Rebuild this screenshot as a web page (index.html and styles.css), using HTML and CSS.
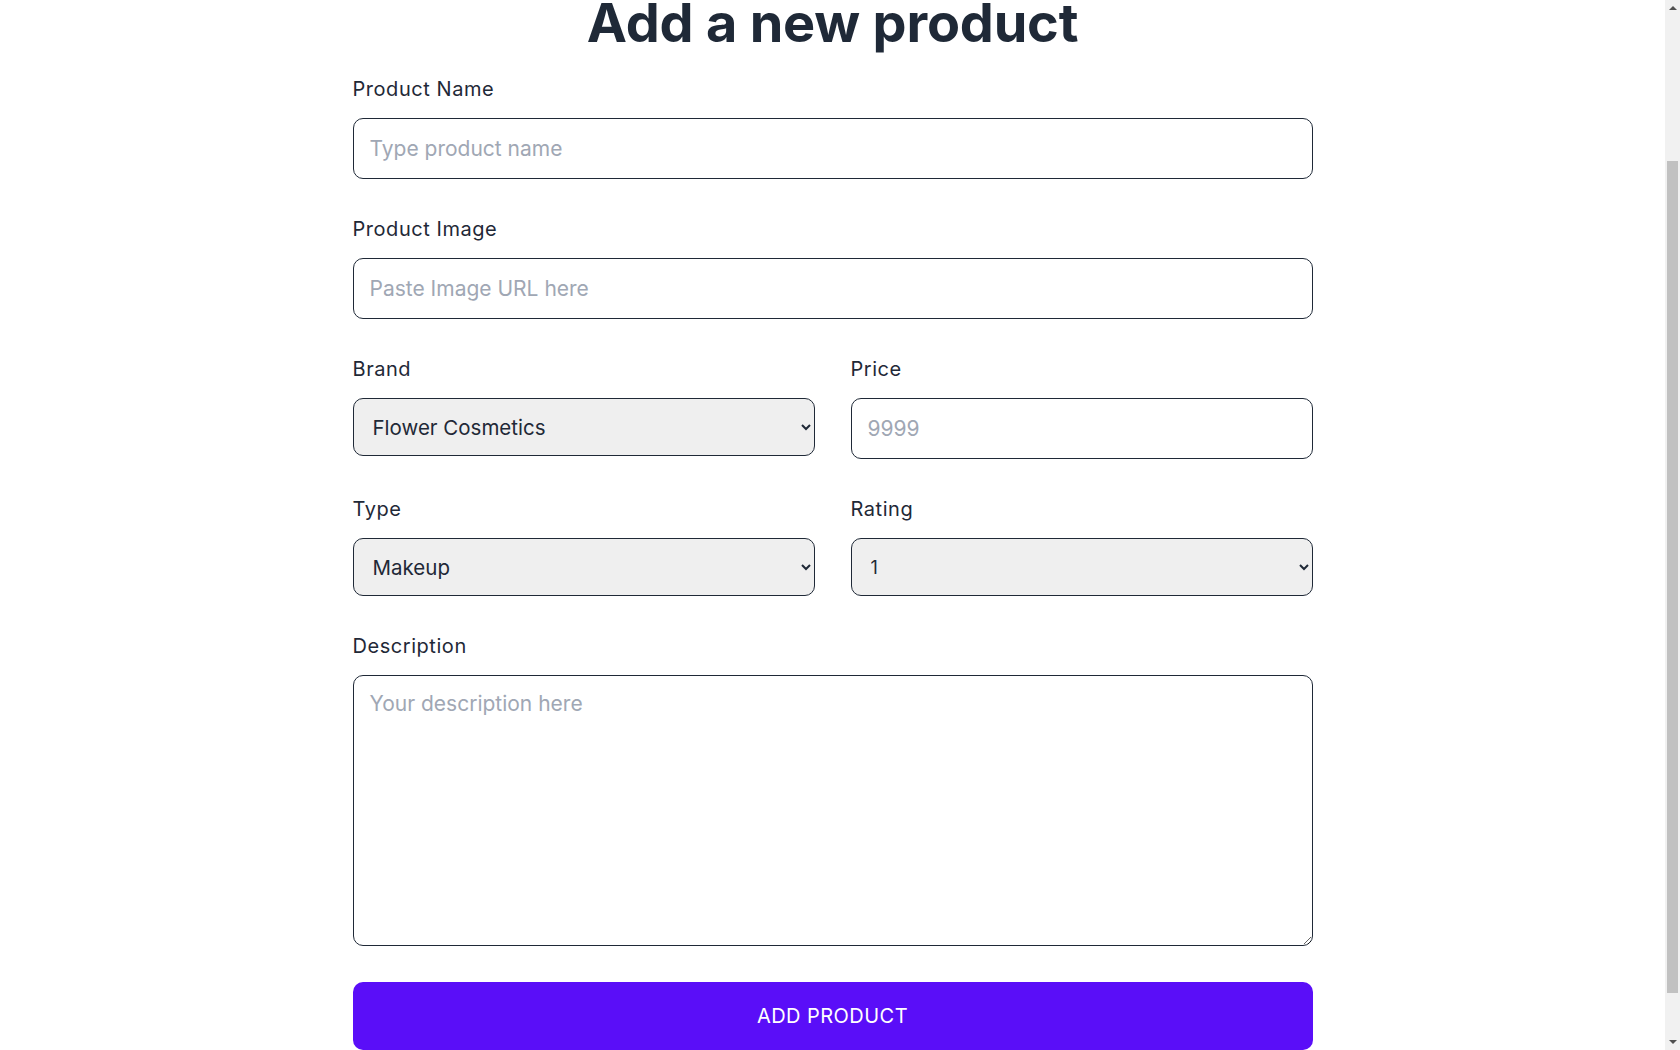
FILE: index.html
```html
<!DOCTYPE html>
<html lang="en">
<head>
<meta charset="utf-8">
<title>Add a new product</title>
<link rel="stylesheet" href="styles.css">
</head>
<body>
<main class="page">
  <h1 class="title">Add a new product</h1>
  <form class="form">
    <div class="field">
      <label class="label" for="name">Product Name</label>
      <input class="input" id="name" type="text" placeholder="Type product name">
    </div>
    <div class="field">
      <label class="label" for="image">Product Image</label>
      <input class="input" id="image" type="text" placeholder="Paste Image URL here">
    </div>
    <div class="row">
      <div class="field">
        <label class="label" for="brand">Brand</label>
        <select class="select" id="brand">
          <option>Flower Cosmetics</option>
        </select>
      </div>
      <div class="field">
        <label class="label" for="price">Price</label>
        <input class="input" id="price" type="text" placeholder="9999">
      </div>
    </div>
    <div class="row">
      <div class="field">
        <label class="label" for="type">Type</label>
        <select class="select" id="type">
          <option>Makeup</option>
        </select>
      </div>
      <div class="field">
        <label class="label" for="rating">Rating</label>
        <select class="select select-small" id="rating">
          <option>1</option>
        </select>
      </div>
    </div>
    <div class="field">
      <label class="label" for="desc">Description</label>
      <textarea class="textarea" id="desc" placeholder="Your description here"></textarea>
    </div>
    <button class="submit" type="button">ADD PRODUCT</button>
  </form>
</main>
<div class="scrollbar" aria-hidden="true">
  <span class="sb-arrow sb-up"></span>
  <span class="sb-thumb"></span>
  <span class="sb-arrow sb-down"></span>
</div>
<script src="script.js"></script>
</body>
</html>
```

FILE: styles.css
```css
html, body {
  margin: 0;
  padding: 0;
  background: #ffffff;
}

html {
  scrollbar-width: none;
}

html::-webkit-scrollbar {
  display: none;
}

body {
  font-family: Inter, "Open Sans", sans-serif;
  color: #1f2937;
  padding-right: 15px;
}

.page {
  width: 960px;
  margin: 0 auto;
  padding: 177px 0 54px;
}

.title {
  margin: 0 0 22px;
  font-size: 54px;
  line-height: 60px;
  font-weight: 700;
  text-align: center;
  color: #1f2937;
  letter-spacing: -0.2px;
}

.form {
  display: flex;
  flex-direction: column;
  gap: 36px;
}

.field {
  display: flex;
  flex-direction: column;
}

.row {
  display: grid;
  grid-template-columns: 1fr 1fr;
  column-gap: 36px;
  align-items: start;
}

.label {
  font-size: 20px;
  line-height: 28px;
  margin-bottom: 15px;
  color: #1f2937;
  letter-spacing: 0.55px;
}

.input,
.select,
.textarea {
  box-sizing: border-box;
  width: 100%;
  border: 1px solid #1f2937;
  border-radius: 10px;
  font-family: Inter, "Open Sans", sans-serif;
  font-size: 21px;
  color: #1f2937;
  margin: 0;
  outline: none;
}

.input {
  height: 61px;
  padding: 0 16px;
  background: #ffffff;
}

.select {
  height: 58px;
  padding: 0 4px 0 15px;
  background-color: #efefef;
  font-size: 20.5px;
}

.select-small {
  font-size: 18px;
}

.textarea {
  height: 271px;
  padding: 14px 16px;
  background: #ffffff;
  resize: vertical;
  line-height: 28px;
}

.input::placeholder,
.textarea::placeholder {
  color: #a0a7b4;
  opacity: 1;
}

.submit {
  height: 68px;
  width: 100%;
  border: none;
  border-radius: 10px;
  background: #5a0ef8;
  color: #ffffff;
  font-family: Inter, "Open Sans", sans-serif;
  font-size: 20px;
  letter-spacing: 0.45px;
  cursor: pointer;
}

.scrollbar {
  position: fixed;
  top: 0;
  right: 0;
  width: 15px;
  height: 100vh;
  background: #f1f1f1;
}

.sb-thumb {
  position: absolute;
  left: 2px;
  width: 11px;
  top: 161px;
  height: 832px;
  background: #c1c1c1;
}

.sb-arrow {
  position: absolute;
  left: 4px;
  width: 0;
  height: 0;
  border-left: 4px solid transparent;
  border-right: 4px solid transparent;
}

.sb-up {
  top: 6px;
  border-bottom: 4px solid #505050;
}

.sb-down {
  bottom: 6px;
  border-top: 4px solid #505050;
}
```

FILE: script.js
```js
window.scrollTo(0, 184);
```
